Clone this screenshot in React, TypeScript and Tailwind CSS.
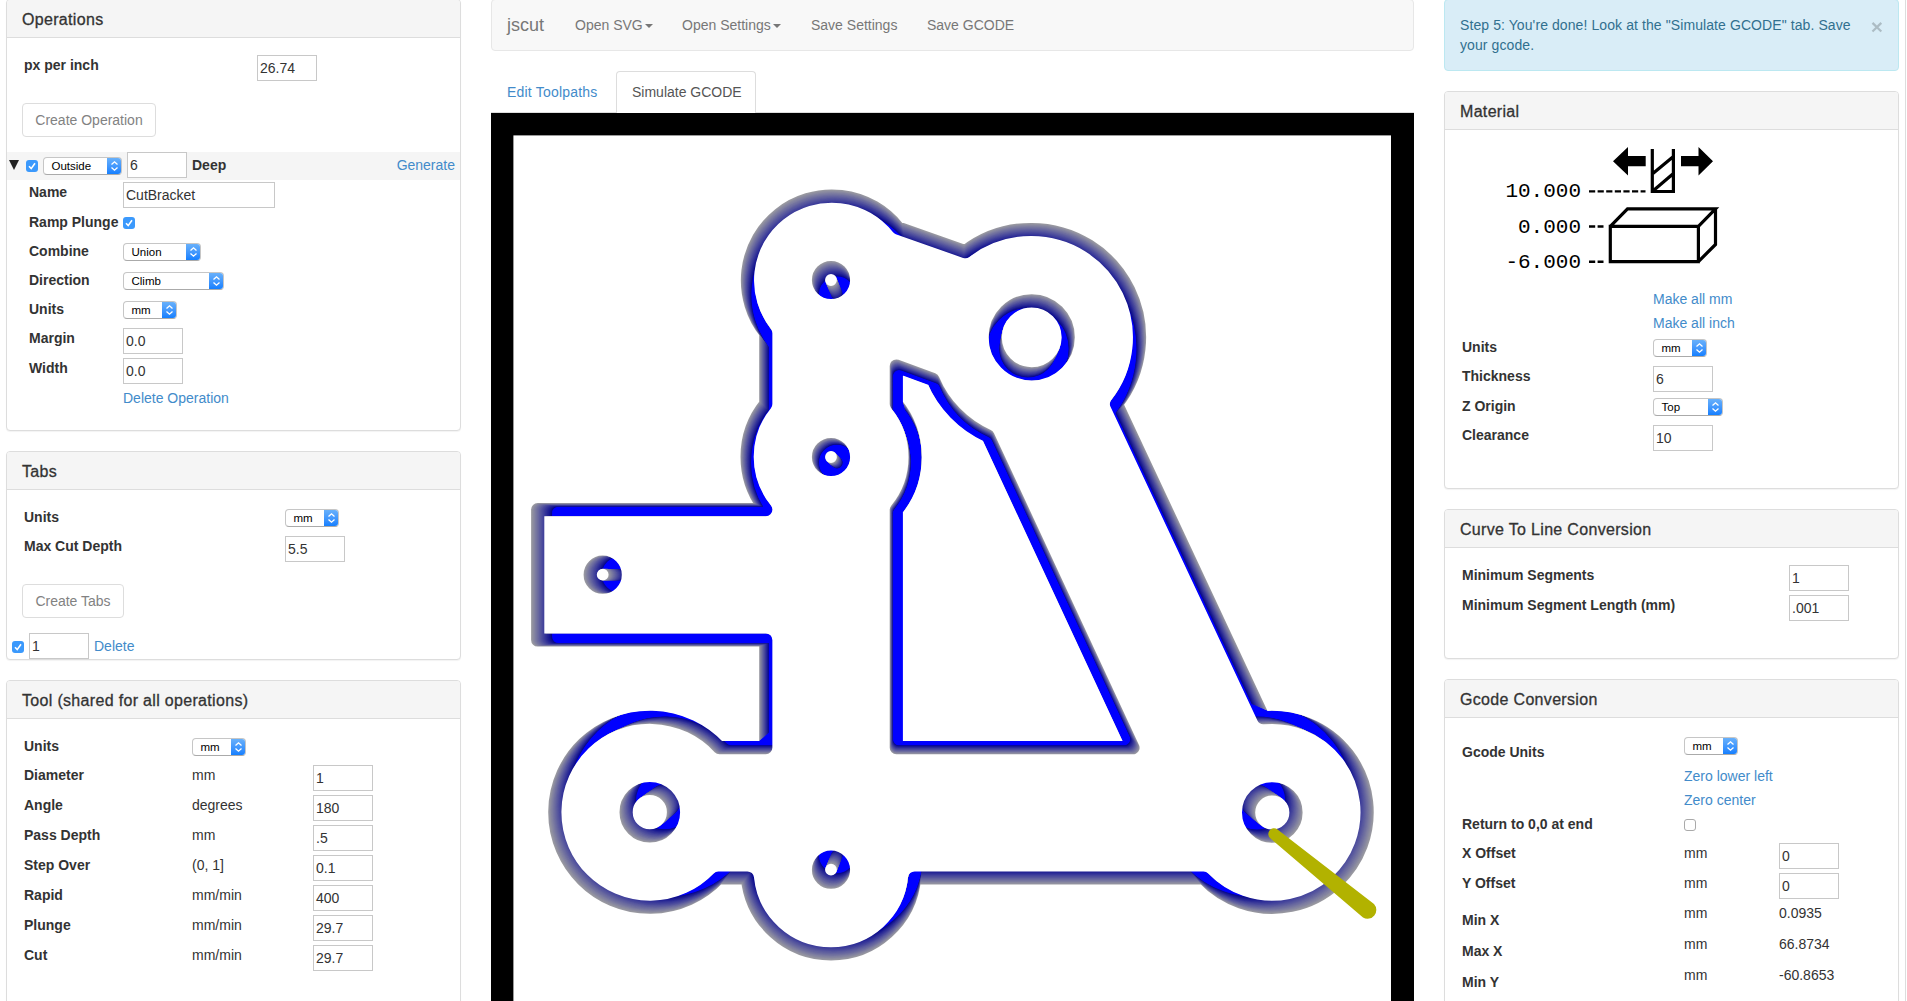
import React from "react";

const OUTLINE =
  "M765.8 333A84 84 0 1 1 898 228L965.3 251.7A107.9 107.9 0 0 1 1031.7 229.5A107.9 107.9 0 0 1 1116.5 404L1263.4 717.7A95 95 0 1 1 1203.5 878L914.6 878A84 84 0 0 1 747.4 878L718.4 878A95 95 0 1 1 719.5 747.7L765.8 747.7L765.8 640L537.7 640L537.7 509.7L765.8 509.7A84 84 0 0 1 765.8 404Z";
const WINDOW =
  "M896.3 366L933 379.5A107.8 107.8 0 0 0 988 436L1133 747.7L896.3 747.7L896.3 510A84 84 0 0 0 896.3 404Z";
const HOLES: [number, number, number][] = [
  [831, 280, 12.5],
  [831, 457, 12.5],
  [831, 869.7, 12.5],
  [602.7, 574.7, 12.5],
  [649.8, 812.2, 23.7],
  [1272.3, 812.5, 23.7],
  [1031.7, 337.3, 36.5],
];
const CX = 952.5;
const CY = 574.5;
const LAYERS = 24;
const DEPTH = 0.052;

// Shade of the trench wall, from the stock's surface (t = 0) to the floor (t = 1).
const wall = (t: number) => {
  const g = Math.round(160 * (1 - t));
  return `rgb(${g},${g},${Math.round(160 - 25 * t * t * t)})`;
};

function Simulation() {
  const layers = Array.from({ length: LAYERS }, (_, i) => LAYERS - 1 - i);
  return (
    <svg className="block h-[888px] w-[923px]" viewBox="491 113 923 888">
      <defs>
        <g id="cut" fill="none" stroke="#000" strokeWidth="13.2" strokeLinejoin="round">
          <path d={OUTLINE} />
          <path d={WINDOW} />
          {HOLES.map(([x, y, r]) => (
            <circle key={`${x}-${y}`} cx={x} cy={y} r={r} />
          ))}
        </g>
        {layers.map((k) => {
          const s = 1 - (DEPTH * k) / LAYERS;
          return (
            <mask key={k} id={`m${k}`} maskUnits="userSpaceOnUse" x="491" y="113" width="923" height="888">
              <rect x="491" y="113" width="923" height="888" fill="#fff" />
              <use href="#cut" transform={`translate(${CX * (1 - s)} ${CY * (1 - s)}) scale(${s})`} />
            </mask>
          );
        })}
      </defs>
      <rect x="491" y="113" width="923" height="888" fill="#000" />
      <rect x="514" y="136" width="876" height="870" fill="#00f" />
      {layers.map((k) => (
        <rect
          key={k}
          x={k ? 520 : 513.4}
          y={k ? 142 : 135.4}
          width={k ? 860 : 877.6}
          height="870"
          fill={k ? wall(k / LAYERS) : "#fff"}
          mask={`url(#m${k})`}
        />
      ))}
      <path d="M1277.5 829.5L1374 904A8.8 8.8 0 0 1 1363 917.5L1270.5 838.5A5.6 5.6 0 0 1 1277.5 829.5Z" fill="#b2b200" />
    </svg>
  );
}

function Select({ w, children }: { w: string; children: string }) {
  return (
    <span className={`${w} flex h-[18px] shrink-0 overflow-hidden rounded-[4px] border border-[#c6c6c6] border-b-[#aaa] bg-white text-black`}>
      <span className="flex-1 pl-[7.5px] text-[11.5px] leading-[17px]">{children}</span>
      <span className="-my-px -mr-px flex w-[15px] items-center justify-center bg-linear-to-b from-[#6cb3fa] to-[#067cff]">
        <svg width="9" height="12" viewBox="0 0 9 12" fill="none" stroke="#fff" strokeWidth="1.3">
          <path d="M1.5 4.6L4.5 1.8L7.5 4.6M1.5 7.4L4.5 10.2L7.5 7.4" />
        </svg>
      </span>
    </span>
  );
}

function Input({ w = "w-[60px]", children }: { w?: string; children: string }) {
  return (
    <span className={`${w} block h-[26px] shrink-0 border border-[#c8c8c8] bg-white pl-[2px] leading-[25px]`}>{children}</span>
  );
}

function Check({ on = true }: { on?: boolean }) {
  if (!on) return <span className="block size-3 rounded-[3px] border border-[#aaa] bg-white" />;
  return (
    <span className="block size-3 rounded-[3px] bg-[#3b99fc]">
      <svg width="12" height="12" viewBox="0 0 12 12" fill="none" stroke="#fff" strokeWidth="1.6">
        <path d="M3 6.3L5.2 8.6L9 3.2" />
      </svg>
    </span>
  );
}

function Panel({ title, className, children }: { title: string; className: string; children: React.ReactNode }) {
  return (
    <section className={`${className} shrink-0 overflow-hidden rounded-[4px] border border-[#ddd] bg-white shadow-[0_1px_1px_rgba(0,0,0,0.05)]`}>
      <h3 className="h-[38px] border-b border-[#ddd] bg-[#f5f5f5] pl-[15px] text-[16px] font-medium leading-[40px] tracking-[0.32px] [-webkit-text-stroke:0.3px_#333]">{title}</h3>
      {children}
    </section>
  );
}

function Row({ label, cols, h = "h-[30px]", children }: { label: string; cols: string; h?: string; children?: React.ReactNode }) {
  return (
    <div className={`grid ${cols} ${h} items-start`}>
      <b>{label}</b>
      {children}
    </div>
  );
}

const link = "text-[#428bca]";
const OP = "grid-cols-[94px_1fr] pl-[22px]";
const TAB = "grid-cols-[261px_1fr] pl-[17px]";
const TOOL = "grid-cols-[168px_121px_1fr] pl-[17px]";
const MAT = "grid-cols-[191px_1fr] pl-[17px]";
const CURVE = "grid-cols-[327px_1fr] pl-[17px]";
const GC = "grid-cols-[222px_95px_1fr] pl-[17px]";

const toolRows = [
  ["Diameter", "mm", "1"],
  ["Angle", "degrees", "180"],
  ["Pass Depth", "mm", ".5"],
  ["Step Over", "(0, 1]", "0.1"],
  ["Rapid", "mm/min", "400"],
  ["Plunge", "mm/min", "29.7"],
  ["Cut", "mm/min", "29.7"],
];

const Caret = () => <span className="ml-[2px] inline-block border-x-4 border-t-4 border-x-transparent border-t-[#777] align-middle" />;

function MaterialDrawing() {
  return (
    <svg className="block h-[159px] w-[453px]" viewBox="1445 130 453 159" fill="none" stroke="#000">
      <g fill="#000" stroke="none" fontFamily="'Liberation Mono', monospace" fontSize="21" textAnchor="end">
        <text x="1581" y="197">10.000</text>
        <text x="1581" y="233">0.000</text>
        <text x="1581" y="267.7">-6.000</text>
      </g>
      <g strokeWidth="2.4" strokeDasharray="6.2 2.4">
        <path d="M1589 191.4H1645.5" />
        <path d="M1589 226.5H1603.5" />
        <path d="M1589 261.7H1603.5" />
      </g>
      <g fill="#000" stroke="none">
        <path d="M1613 161.2L1628 147V156H1645.7V166.3H1628V175.5Z" />
        <path d="M1713 161.2L1698.5 147V156H1681V166.3H1698.5V175.5Z" />
      </g>
      <g strokeWidth="3.2">
        <path d="M1652.3 149V191.5H1673.4V149M1652.3 174L1673.4 156.5M1652.3 191.5L1673.4 173.5" />
        <path d="M1610.3 226.3H1698.4V261.6H1610.3ZM1610.3 226.3L1627.5 208.8H1715.5L1698.4 226.3M1715.5 208.8V244.5L1698.4 261.6" />
      </g>
    </svg>
  );
}

export default function App() {
  return (
    <div className="flex h-[1001px] w-[1907px] overflow-hidden bg-white font-['Liberation_Sans',Arial,sans-serif] text-[14px] leading-[20px] text-[#333]">
      <div className="-mt-px ml-[6px] flex w-[455px] shrink-0 flex-col gap-5">
        <Panel title="Operations" className="h-[432px]">
          <div className="pt-[17px]">
            <Row label="px per inch" cols="grid-cols-[233px_1fr] pl-[17px]">
              <Input>26.74</Input>
            </Row>
          </div>
          <div className="mt-[18px] ml-[15px] h-[34px] w-[134px] rounded-[4px] border border-[#ddd] text-center leading-[32px] text-[#828282]">Create Operation</div>
          <div className="mt-[15px] flex h-[28px] items-start bg-[#f5f5f5] pr-[5px]">
            <svg className="mt-[8px] ml-[2px] mr-[7px]" width="10" height="10" viewBox="0 0 10 10">
              <path d="M0 0H10L5 10Z" fill="#222" />
            </svg>
            <div className="mt-[8px] mr-[5px]"><Check /></div>
            <div className="mt-[5px] mr-[5px]"><Select w="w-[79px]">Outside</Select></div>
            <Input>6</Input>
            <b className="ml-[5px] mt-[3px] flex-1">Deep</b>
            <span className={`${link} mt-[3px]`}>Generate</span>
          </div>
          <div className="pt-[2px]">
            <Row label="Name" cols={OP}><Input w="w-[152px]">CutBracket</Input></Row>
            <Row label="Ramp Plunge" cols={OP} h="h-[29px]"><div className="pt-[5px]"><Check /></div></Row>
            <Row label="Combine" cols={OP} h="h-[29px]"><div className="pt-[2px]"><Select w="w-[78px]">Union</Select></div></Row>
            <Row label="Direction" cols={OP} h="h-[29px]"><div className="pt-[2px]"><Select w="w-[101px]">Climb</Select></div></Row>
            <Row label="Units" cols={OP} h="h-[29px]"><div className="pt-[2px]"><Select w="w-[54px]">mm</Select></div></Row>
            <Row label="Margin" cols={OP}><Input>0.0</Input></Row>
            <Row label="Width" cols={OP}><Input>0.0</Input></Row>
            <Row label="" cols={OP}><span className={link}>Delete Operation</span></Row>
          </div>
        </Panel>

        <Panel title="Tabs" className="h-[209px]">
          <div className="pt-[17px]">
            <Row label="Units" cols={TAB} h="h-[29px]"><div className="pt-[2px]"><Select w="w-[54px]">mm</Select></div></Row>
            <Row label="Max Cut Depth" cols={TAB}><Input>5.5</Input></Row>
          </div>
          <div className="mt-[18px] ml-[15px] h-[34px] w-[102px] rounded-[4px] border border-[#ddd] text-center leading-[32px] text-[#828282]">Create Tabs</div>
          <div className="mt-[15px] flex items-start pl-[5px]">
            <div className="mt-[8px] mr-[5px]"><Check /></div>
            <Input>1</Input>
            <span className={`${link} ml-[5px] mt-[3px]`}>Delete</span>
          </div>
        </Panel>

        <Panel title="Tool (shared for all operations)" className="h-[400px]">
          <div className="pt-[17px]">
            <Row label="Units" cols={TOOL} h="h-[29px]"><div className="pt-[2px]"><Select w="w-[54px]">mm</Select></div></Row>
            {toolRows.map(([label, unit, value]) => (
              <Row key={label} label={label} cols={TOOL}>
                <span>{unit}</span>
                <Input>{value}</Input>
              </Row>
            ))}
          </div>
        </Panel>
      </div>

      <div className="-mt-px ml-[30px] w-[923px] shrink-0">
        <nav className="flex h-[52px] items-center rounded-[4px] border border-[#e7e7e7] bg-[#f8f8f8] pl-[15px] text-[#777]">
          <span className="w-[68px] text-[18px]">jscut</span>
          <span className="w-[107px]">Open SVG<Caret /></span>
          <span className="w-[129px]">Open Settings<Caret /></span>
          <span className="w-[116px]">Save Settings</span>
          <span>Save GCODE</span>
        </nav>
        <div className="mt-5 flex h-[42px] border-b border-[#ddd]">
          <span className={`${link} w-[125px] pt-[11px] pl-[16px] tracking-[0.2px]`}>Edit Toolpaths</span>
          <span className="h-[42px] w-[140px] rounded-t-[4px] border border-b-0 border-[#ddd] bg-white pt-[10px] pl-[15px] text-[#555]">Simulate GCODE</span>
        </div>
        <Simulation />
      </div>

      <div className="-mt-px ml-[30px] flex w-[455px] shrink-0 flex-col gap-5">
        <div className="flex h-[72px] shrink-0 justify-between rounded-[4px] border border-[#bce8f1] bg-[#d9edf7] pt-[15px] pl-[15px] pr-[15px] text-[#31708f]">
          <p className="w-[400px] tracking-[0.09px]">Step 5: You're done! Look at the "Simulate GCODE" tab. Save<br />your gcode.</p>
          <span className="mt-[1px] text-[21px] font-bold leading-[21px] text-black opacity-20">×</span>
        </div>

        <Panel title="Material" className="h-[398px]">
          <MaterialDrawing />
          <Row label="" cols={MAT} h="h-[24px]"><span className={link}>Make all mm</span></Row>
          <Row label="" cols={MAT} h="h-[24px]"><span className={link}>Make all inch</span></Row>
          <Row label="Units" cols={MAT} h="h-[29px]"><div className="pt-[2px]"><Select w="w-[54px]">mm</Select></div></Row>
          <Row label="Thickness" cols={MAT}><Input>6</Input></Row>
          <Row label="Z Origin" cols={MAT} h="h-[29px]"><div className="pt-[2px]"><Select w="w-[70px]">Top</Select></div></Row>
          <Row label="Clearance" cols={MAT}><Input>10</Input></Row>
        </Panel>

        <Panel title="Curve To Line Conversion" className="h-[150px]">
          <div className="pt-[17px]">
            <Row label="Minimum Segments" cols={CURVE}><Input>1</Input></Row>
            <Row label="Minimum Segment Length (mm)" cols={CURVE}><Input>.001</Input></Row>
          </div>
        </Panel>

        <Panel title="Gcode Conversion" className="h-[400px]">
          <div className="pt-[17px]">
            <div className={`grid ${GC} h-[31px] items-start`}>
              <b className="pt-[7px]">Gcode Units</b>
              <div className="pt-[2px]"><Select w="w-[54px]">mm</Select></div>
            </div>
            <Row label="" cols={GC} h="h-[24px]"><span className={link}>Zero lower left</span></Row>
            <Row label="" cols={GC} h="h-[24px]"><span className={link}>Zero center</span></Row>
            <Row label="Return to 0,0 at end" cols={GC} h="h-[29px]"><div className="pt-[5px]"><Check on={false} /></div></Row>
            <Row label="X Offset" cols={GC}><span>mm</span><Input>0</Input></Row>
            <Row label="Y Offset" cols={GC}><span>mm</span><Input>0</Input></Row>
            {[["Min X", "0.0935"], ["Max X", "66.8734"], ["Min Y", "-60.8653"]].map(([l, v]) => (
              <div key={l} className={`grid ${GC} h-[31px] items-start`}>
                <b className="pt-[7px]">{l}</b>
                <span>mm</span>
                <span>{v}</span>
              </div>
            ))}
          </div>
        </Panel>
      </div>
      <div className="ml-[6px] w-px bg-[#ddd]" />
    </div>
  );
}
